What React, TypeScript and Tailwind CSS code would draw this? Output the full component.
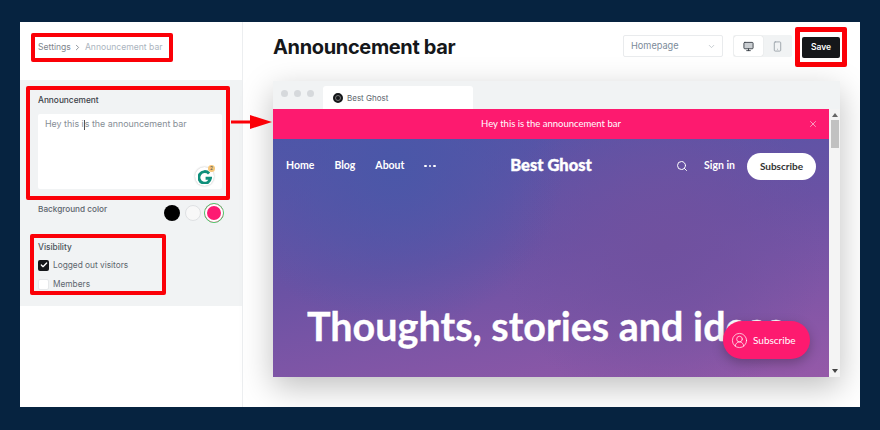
import React from "react";
import { ChevronDown, ChevronRight, Monitor, Search, Smartphone, X, Check, CircleUserRound } from "lucide-react";

const redBox = "border-[4px] border-[#fb0007] rounded-[2px]";

const Sidebar = () => {
  return (
    <aside className="w-[223px] shrink-0 h-full border-r border-[#eceef0] flex flex-col">
      <div className="h-[58px] shrink-0 pl-[11px] pt-[11px]">
        <div className={`${redBox} w-[142px] h-[29px] pl-[3px] flex items-center text-[8.6px] text-[#7f868d] whitespace-nowrap`}>
          <span>Settings</span>
          <ChevronRight size={9} strokeWidth={2.5} className="shrink-0 mx-[2.5px] text-[#8a9097]" />
          <span className="text-[#abb4be]">Announcement bar</span>
        </div>
      </div>
      <div className="h-[226px] bg-[#f1f3f4] w-[222px] pl-[6px] pt-[6px]">
        <div className={`${redBox} w-[204px] h-[114px] pl-[8px] pt-[4px]`}>
          <div className="text-[8.3px] leading-[12px] font-medium text-[#394047]">Announcement</div>
          <div className="relative mt-[8px] w-[184px] h-[75px] bg-white rounded-[2px] pl-[7px] pt-[3px] text-[8.9px] leading-[14px] text-[#868e96]">
            Hey this i<span className="inline-block w-px h-[10px] bg-[#555] align-middle" />s the announcement bar
            <div className="absolute right-[8px] bottom-[3px] w-[19px] h-[19px] rounded-full bg-white shadow-[0_0_2px_rgba(0,0,0,0.3)] flex items-center justify-center">
              <svg width="14" height="14" viewBox="0 0 24 24">
                <path d="M19 6a10 10 0 1 0 2.5 8H13" fill="none" stroke="#0f8f7b" strokeWidth="5" />
              </svg>
              <span className="absolute -top-[2px] -right-[1px] w-[7px] h-[7px] rounded-full bg-[#f7c77a] text-[5px] leading-[7px] text-center text-[#555]">2</span>
            </div>
          </div>
        </div>
        <div className="mt-[1px] w-[198px] flex justify-between pl-[12px]">
          <span className="text-[8.2px] leading-[12px] mt-[2px] font-medium text-[#5d666e]">Background color</span>
          <div className="flex items-center gap-[5px] mt-[2px]">
            <span className="w-[16px] h-[16px] rounded-full bg-black" />
            <span className="w-[16px] h-[16px] rounded-full bg-[#f8f8f8] border border-[#dfe1e3]" />
            <span className="w-[20px] h-[20px] -ml-[2px] rounded-full bg-[#fd1a72] border-[1px] border-[#45d16a] outline-[2px] outline-white outline-offset-[-3px]" />
          </div>
        </div>
        <div className={`${redBox} mt-[11px] ml-[4px] w-[136px] h-[61px] pl-[4px] pt-[3px] text-[8.3px]`}>
          <div className="leading-[12px] font-medium text-[#4b535a]">Visibility</div>
          <div className="mt-[6px] flex items-center gap-[4px] h-[12px]">
            <span className="w-[11px] h-[11px] rounded-[2px] bg-[#15171a] flex items-center justify-center">
              <Check size={8} strokeWidth={4} className="text-white" />
            </span>
            <span className="text-[#5d666e]">Logged out visitors</span>
          </div>
          <div className="mt-[7px] flex items-center gap-[4px] h-[12px]">
            <span className="w-[11px] h-[11px] rounded-[2px] bg-white border border-[#e6e8ea]" />
            <span className="text-[#5d666e]">Members</span>
          </div>
        </div>
      </div>
    </aside>
  );
};

const Toolbar = () => {
  return (
    <div className="h-[59px] shrink-0 flex items-start justify-between">
      <h1 className="mt-[11px] ml-[30px] text-[20px] leading-[28px] font-bold text-[#15171a] tracking-[-0.35px]">
        Announcement bar
      </h1>
      <div className="flex items-start">
        <div className="mt-[13px] w-[100px] h-[22px] border border-[#e9ebed] rounded-[2px] pl-[7px] pr-[6px] flex items-center justify-between text-[9.2px] text-[#7c8b9a]">
          Homepage
          <ChevronDown size={9} className="text-[#b5bcc3]" />
        </div>
        <div className="mt-[13px] ml-[10px] w-[59px] h-[22px] rounded-[2px] bg-[#f1f3f4] flex items-center">
          <div className="w-[29px] h-[20px] ml-[1px] bg-white rounded-[2px] flex items-center justify-center shadow-[0_0_1px_rgba(0,0,0,0.2)]">
            <Monitor size={11} fill="#c9cdd1" className="text-[#394047]" />
          </div>
          <div className="flex-1 flex items-center justify-center">
            <Smartphone size={11} className="text-[#9aa2a9]" />
          </div>
        </div>
        <div className="ml-[3px] mt-[5px] w-[52px] h-[40px] border-[5px] border-[#fb0007] rounded-[2px] flex items-center justify-center">
          <button className="w-[38px] h-[21px] rounded-[2px] bg-[#15171a] text-white text-[8.5px] font-semibold">Save</button>
        </div>
        <div className="w-[13px]" />
      </div>
    </div>
  );
};

const Preview = () => {
  const theme = "font-['Lato',sans-serif] text-white";
  return (
    <div className="ml-[30px] w-[567px] h-[296px] shadow-[0_10px_30px_rgba(0,0,0,0.25)] flex flex-col">
      <div className="h-[28px] shrink-0 bg-[#f1f3f4] flex items-end pl-[8px]">
        <div className="flex gap-[6px] mb-[12px]">
          <span className="w-[7px] h-[7px] rounded-full bg-[#d6d9dc]" />
          <span className="w-[7px] h-[7px] rounded-full bg-[#d6d9dc]" />
          <span className="w-[7px] h-[7px] rounded-full bg-[#d6d9dc]" />
        </div>
        <div className="ml-[9px] w-[150px] h-[23px] bg-white rounded-t-[3px] flex items-center pl-[10px] gap-[4px] text-[8px] text-[#5d666e]">
          <span className="w-[10px] h-[10px] rounded-full bg-[#15171a] border-[2px] border-[#15171a] outline outline-[1px] outline-[#777] outline-offset-[-3px]" />
          Best Ghost
        </div>
      </div>
      <div className="flex-1 flex min-h-0">
        <div className="w-[556px] flex flex-col">
          <div className={`${theme} h-[30px] shrink-0 bg-[#fd1a6f] relative flex items-center justify-center text-[9.5px]`}>
            Hey this is the announcement bar
            <X size={10} className="absolute right-[11px] text-[#f8b6cf]" />
          </div>
          <div className={`${theme} relative flex-1 bg-[radial-gradient(circle_at_22%_10%,#4a57a8_0%,transparent_35%),radial-gradient(circle_at_70%_45%,#70519f_0%,transparent_40%),linear-gradient(170deg,#5055a8_0%,#6a52a4_45%,#9559a8_100%)] overflow-hidden`}>
            <div className="h-[54px] pl-[13px] pr-[13px] flex items-center justify-between">
              <nav className="flex items-center gap-[20px] text-[10.5px] font-bold">
                <span>Home</span>
                <span>Blog</span>
                <span>About</span>
                <span className="flex gap-[2px]">
                  <span className="w-[2.5px] h-[2.5px] rounded-full bg-white" />
                  <span className="w-[2.5px] h-[2.5px] rounded-full bg-white" />
                  <span className="w-[2.5px] h-[2.5px] rounded-full bg-white" />
                </span>
              </nav>
              <div className="flex items-center">
                <Search size={12} className="mr-[16px]" />
                <span className="text-[10.5px] font-bold mr-[12px]">Sign in</span>
                <span className="w-[69px] h-[27px] rounded-full bg-white text-[#333] text-[10px] font-bold flex items-center justify-center">Subscribe</span>
              </div>
            </div>
            <div className="absolute left-0 right-0 top-[16px] text-center text-[16.5px] leading-[20px] font-black [-webkit-text-stroke:0.4px_white]">Best Ghost</div>
            <div className="mt-[108px] pl-[34px] text-[39.5px] leading-[50px] font-bold whitespace-nowrap [-webkit-text-stroke:0.3px_white]">Thoughts, stories and ideas</div>
          </div>
        </div>
        <div className="relative flex-1 bg-[#f4f4f4] flex flex-col items-center justify-between py-[4px]">
          <span className="w-0 h-0 border-x-[3px] border-x-transparent border-b-[4px] border-b-[#666]" />
          <span className="absolute top-[11px] w-[8px] h-[28px] bg-[#c1c1c1]" />
          <span className="w-0 h-0 border-x-[3px] border-x-transparent border-t-[4px] border-t-[#444]" />
        </div>
      </div>
    </div>
  );
};

const App = () => {
  return (
    <div className="relative w-[880px] h-[430px] bg-[#062340] pt-[22px] px-[20px] overflow-hidden font-['Inter',sans-serif]">
      <div className="relative w-[840px] h-[385px] bg-white flex overflow-hidden">
        <Sidebar />
        <main className="flex-1 min-w-0 flex flex-col">
          <Toolbar />
          <Preview />
        </main>
        {/* floating subscribe button */}
        <div className="absolute left-[703px] top-[299px] w-[87px] h-[38px] rounded-full bg-[#fd1a6f] shadow-[0_4px_12px_rgba(0,0,0,0.25)] flex items-center pl-[8px] gap-[5px] text-white font-['Lato',sans-serif] text-[10px]">
          <CircleUserRound size={17} strokeWidth={1} />
          Subscribe
        </div>
        {/* arrow from the settings box to the preview */}
        <svg className="absolute left-[211px] top-[92px]" width="42" height="16" viewBox="0 0 42 16">
          <path d="M0 6.5H19V1L41 8L19 15V9.5H0Z" fill="#fb0007" />
        </svg>
      </div>
    </div>
  );
};

export default App;
